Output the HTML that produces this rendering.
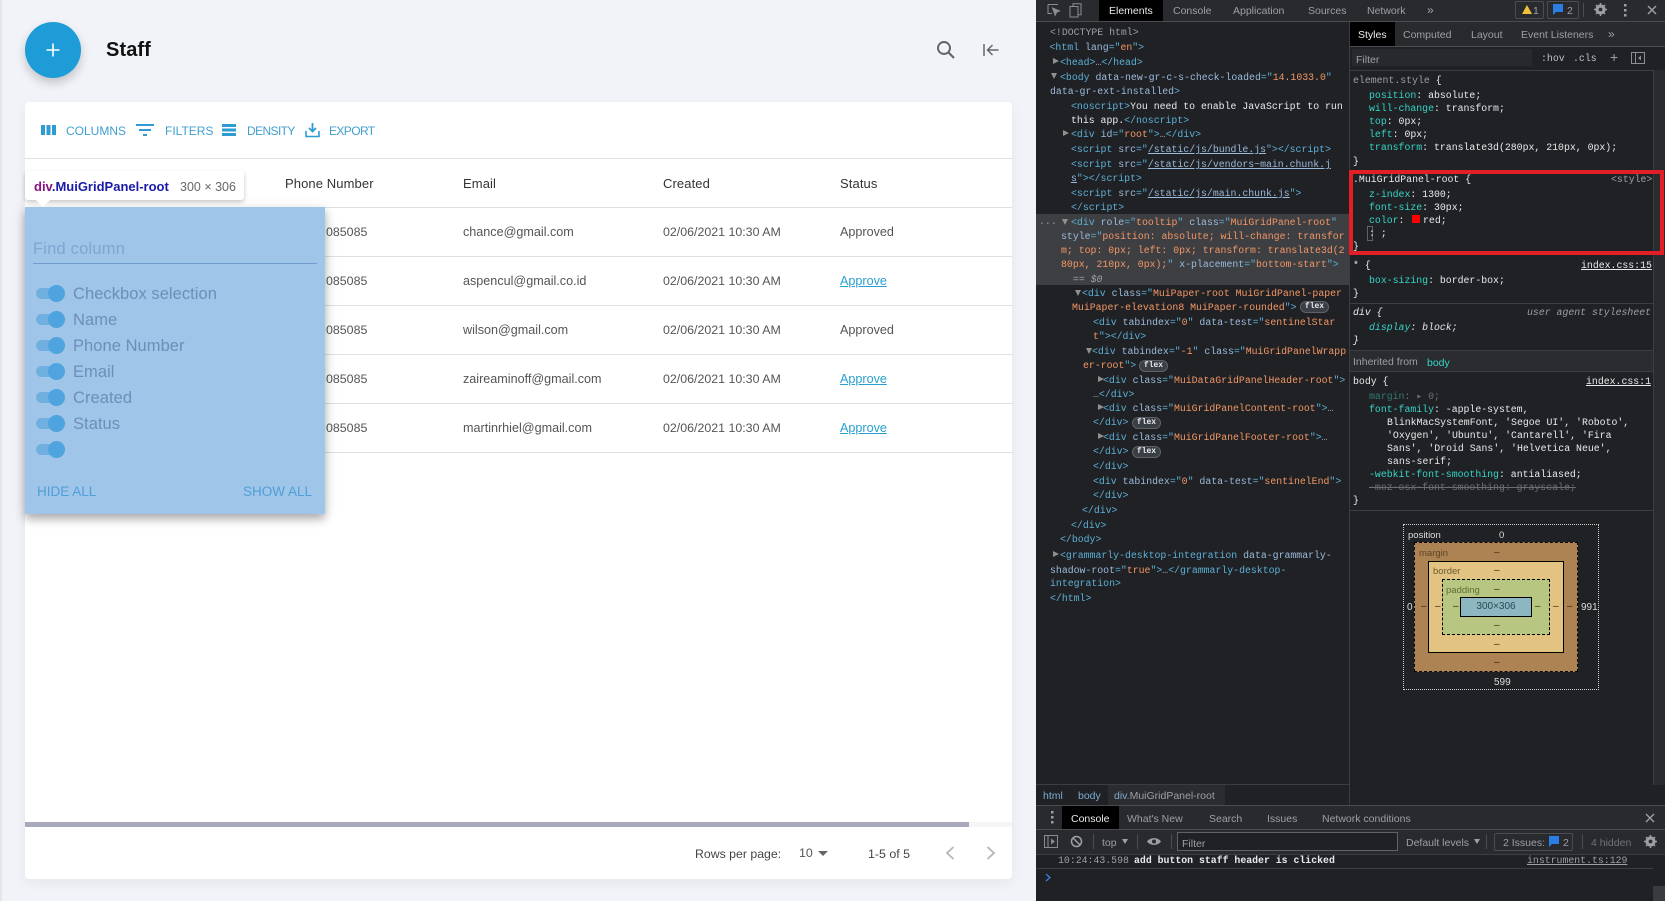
<!DOCTYPE html>
<html lang="en"><head><meta charset="utf-8"><title>Staff</title>
<style>
*{box-sizing:border-box}
html,body{margin:0;padding:0;width:1665px;height:901px;overflow:hidden;background:#f1f3f8;font-family:"Liberation Sans",sans-serif}
.a{position:absolute;white-space:pre}
.c{position:absolute;white-space:pre;font-size:12.4px;line-height:16px;color:#555}
.e{font-size:12.6px}
.h{color:#333;font-size:13px;letter-spacing:.1px}
.rl{position:absolute;left:325px;width:687px;height:1px;background:#e0e0e0}
.tb{position:absolute;font-size:12px;line-height:16px;top:123px;color:#3f9fce}
.sw{position:absolute;left:36px;width:23px;height:11px;border-radius:6px;background:#70b0e0}
.sw:after{content:"";position:absolute;left:12px;top:-3px;width:17px;height:17px;border-radius:50%;background:#4fa3de}
.lb{position:absolute;left:73px;font-size:16.5px;line-height:20px;color:#6a90ba;white-space:pre;letter-spacing:.05px}
#dt{position:absolute;left:1036px;top:0;width:629px;height:901px;background:#202124;overflow:hidden}
.l,.s{position:absolute;margin-top:2px;font-family:"Liberation Mono",monospace;font-size:9.85px;line-height:14px;height:14px;white-space:pre;color:#e8eaed}
.t{color:#5db0d7}.n{color:#9bbbdc}.v{color:#f29766}.g{color:#9aa0a6}
.p{color:#35d4c7}.f{font-family:"Liberation Sans",sans-serif;color:#9aa0a6;font-size:10.5px;line-height:14px;margin-top:1px;position:absolute;white-space:pre}
.d{position:absolute;font:10px/12px "Liberation Sans",sans-serif;color:#3a2a12}
.ar{position:absolute;width:0;height:0;border-left:6px solid #909090;border-top:3.5px solid transparent;border-bottom:3.5px solid transparent}
.ad{position:absolute;width:0;height:0;border-top:6px solid #909090;border-left:3.5px solid transparent;border-right:3.5px solid transparent}
.fx{position:absolute;width:29px;height:12px;border-radius:7px;border:1px solid #5f6368;background:#3a3f45;color:#e8eaed;font:bold 8px/10px "Liberation Mono",monospace;text-align:center}
.hr{position:absolute;background:#3c3d40}
</style></head><body>
<div style="position:absolute;left:0;top:0;width:2px;height:901px;background:#e3e5e9"></div>

<div style="position:absolute;left:25px;top:22px;width:56px;height:56px;border-radius:50%;background:#1e9cd7;box-shadow:0 5px 10px rgba(0,0,0,.2)"></div>
<svg class="a" style="left:45px;top:42px" width="16" height="16"><path d="M8 1.5v13M1.5 8h13" stroke="#fff" stroke-width="1.6" fill="none"/></svg>
<div class="a" style="left:106px;top:37px;font-size:20px;line-height:26px;color:#111;font-weight:bold;letter-spacing:.1px">Staff</div>
<svg class="a" style="left:935px;top:39px" width="21" height="21" viewBox="0 0 21 21"><circle cx="9" cy="9" r="6" fill="none" stroke="#5f6368" stroke-width="1.9"/><path d="M13.4 13.4l5.6 5.6" stroke="#5f6368" stroke-width="2.1"/></svg>
<svg class="a" style="left:982px;top:42px" width="18" height="16" viewBox="0 0 18 16"><path d="M2 2v12" stroke="#666" stroke-width="1.5"/><path d="M16.5 8H6M10.5 3L5.5 8l5 5" stroke="#666" stroke-width="1.5" fill="none"/></svg>

<div style="position:absolute;left:25px;top:102px;width:987px;height:777px;background:#fff;border-radius:4px;box-shadow:0 4px 12px rgba(30,40,70,.06)"></div>
<div style="position:absolute;left:25px;top:158px;width:987px;height:1px;background:#e0e0e0"></div>
<div style="position:absolute;left:25px;top:207px;width:987px;height:1px;background:#e0e0e0"></div>
<div class="rl" style="top:256px"></div><div class="rl" style="top:305px"></div><div class="rl" style="top:354px"></div><div class="rl" style="top:403px"></div><div class="rl" style="top:452px"></div>

<svg class="a" style="left:41px;top:124px" width="15" height="12"><path d="M0 1h4v10H0zM5.500 1h4v10h-4zM11 1h4v10h-4z" fill="#2f9bd3"/></svg>
<div class="tb" style="left:66px">COLUMNS</div>
<svg class="a" style="left:136px;top:123px" width="18" height="14"><path d="M0 1h18v2H0zM3 6h12v2H3zM7 11h4v2H7z" fill="#2f9bd3"/></svg>
<div class="tb" style="left:165px">FILTERS</div>
<svg class="a" style="left:222px;top:124px" width="14" height="12"><path d="M0 0h14v3H0zM0 4.500h14v3H0zM0 9h14v3H0z" fill="#2f9bd3"/></svg>
<div class="tb" style="left:247px;letter-spacing:-.6px">DENSITY</div>
<svg class="a" style="left:305px;top:122px" width="15" height="16" viewBox="0 0 15 16"><path d="M1 9v5.500h13V9" fill="none" stroke="#2f9bd3" stroke-width="1.6"/><path d="M7.500 1v8M4 6l3.500 3.500L11 6" fill="none" stroke="#2f9bd3" stroke-width="1.8"/></svg>
<div class="tb" style="left:329px;letter-spacing:-.6px">EXPORT</div>

<div class="c h" style="left:285px;top:176px">Phone Number</div>
<div class="c h" style="left:463px;top:176px">Email</div>
<div class="c h" style="left:663px;top:176px">Created</div>
<div class="c h" style="left:840px;top:176px">Status</div>

<div class="c" style="left:326px;top:224px">085085</div><div class="c e" style="left:463px;top:224px">chance@gmail.com</div><div class="c" style="left:663px;top:224px">02/06/2021 10:30 AM</div><div class="c e" style="left:840px;top:224px">Approved</div>
<div class="c" style="left:326px;top:273px">085085</div><div class="c e" style="left:463px;top:273px">aspencul@gmail.co.id</div><div class="c" style="left:663px;top:273px">02/06/2021 10:30 AM</div><div class="c e" style="left:840px;top:273px;color:#2a9fd0;text-decoration:underline">Approve</div>
<div class="c" style="left:326px;top:322px">085085</div><div class="c e" style="left:463px;top:322px">wilson@gmail.com</div><div class="c" style="left:663px;top:322px">02/06/2021 10:30 AM</div><div class="c e" style="left:840px;top:322px">Approved</div>
<div class="c" style="left:326px;top:371px">085085</div><div class="c e" style="left:463px;top:371px">zaireaminoff@gmail.com</div><div class="c" style="left:663px;top:371px">02/06/2021 10:30 AM</div><div class="c e" style="left:840px;top:371px;color:#2a9fd0;text-decoration:underline">Approve</div>
<div class="c" style="left:326px;top:420px">085085</div><div class="c e" style="left:463px;top:420px">martinrhiel@gmail.com</div><div class="c" style="left:663px;top:420px">02/06/2021 10:30 AM</div><div class="c e" style="left:840px;top:420px;color:#2a9fd0;text-decoration:underline">Approve</div>

<div style="position:absolute;left:25px;top:822px;width:987px;height:5px;background:#f5f5f5"></div>
<div style="position:absolute;left:25px;top:822px;width:944px;height:5px;background:#a9a9bc"></div>
<div class="c" style="left:695px;top:846px;color:#444;font-size:12.3px">Rows per page:</div>
<div class="c" style="left:799px;top:845px;color:#555">10</div>
<div class="a" style="left:818px;top:851px;width:0;height:0;border-top:5px solid #666;border-left:5px solid transparent;border-right:5px solid transparent"></div>
<div class="c" style="left:868px;top:846px;color:#444">1-5 of 5</div>
<svg class="a" style="left:944px;top:845px" width="12" height="16"><path d="M9.500 2L3 8l6.500 6" fill="none" stroke="#b5b5b5" stroke-width="1.8"/></svg>
<svg class="a" style="left:985px;top:845px" width="12" height="16"><path d="M2.500 2L9 8l-6.500 6" fill="none" stroke="#b5b5b5" stroke-width="1.8"/></svg>

<div style="position:absolute;left:25px;top:207px;width:300px;height:307px;background:#9fc5e8;box-shadow:0 5px 8px rgba(0,0,0,.25),0 3px 14px rgba(0,0,0,.12)"></div>
<div class="a" style="left:33px;top:239px;font-size:16.5px;line-height:20px;color:#7fa6d0;letter-spacing:.2px">Find column</div>
<div style="position:absolute;left:33px;top:263px;width:284px;height:1px;background:#6f9bcf"></div>
<div class="sw" style="top:288px"></div><div class="lb" style="top:284px">Checkbox selection</div>
<div class="sw" style="top:314px"></div><div class="lb" style="top:310px">Name</div>
<div class="sw" style="top:340px"></div><div class="lb" style="top:336px">Phone Number</div>
<div class="sw" style="top:366px"></div><div class="lb" style="top:362px">Email</div>
<div class="sw" style="top:392px"></div><div class="lb" style="top:388px">Created</div>
<div class="sw" style="top:418px"></div><div class="lb" style="top:414px">Status</div>
<div class="sw" style="top:444px"></div>
<div class="a" style="left:37px;top:484px;font-size:13.5px;line-height:16px;color:#4f9fd8">HIDE ALL</div>
<div class="a" style="left:243px;top:484px;font-size:13.5px;line-height:16px;color:#4f9fd8">SHOW ALL</div>

<div style="position:absolute;left:25px;top:171px;width:219px;height:29px;background:#fff;border-radius:3px;box-shadow:0 2px 5px rgba(0,0,0,.22)"></div>
<div class="a" style="left:36px;top:200px;width:0;height:0;border-top:7px solid #fff;border-left:7.500px solid transparent;border-right:7.500px solid transparent"></div>
<div class="a" style="left:34px;top:179px;font-size:13px;line-height:16px;font-weight:bold"><span style="color:#881280">div</span><span style="color:#1a1aa6">.MuiGridPanel-root</span></div>
<div class="a" style="left:180px;top:179px;font-size:12.5px;line-height:16px;color:#666">300 × 306</div>

<div id="dt">
<div style="position:absolute;left:0;top:0;width:629px;height:21px;background:#292a2d"></div>
<div class="hr" style="left:0;top:21px;width:629px;height:1px;background:#494c50"></div>
<svg class="a" style="left:11px;top:3px" width="40" height="15" viewBox="0 0 40 15" fill="none" stroke="#8a8d91"><path d="M1 1.500h10M1 1.500v9h4" stroke-width="1"/><path d="M5.500 5l7 3-3 1.300-1.300 3z" fill="#8a8d91"/><rect x="23" y="3.500" width="8" height="10.500"/><path d="M26 3.500V.7h8v11h-3"/></svg>
<div class="hr" style="left:63px;top:3px;width:1px;height:14px;background:#4a4c50"></div>
<div style="position:absolute;left:63px;top:0;width:64px;height:21px;background:#000"></div>
<div class="f" style="left:73px;top:3px;color:#e8eaed">Elements</div>
<div class="f" style="left:137px;top:3px">Console</div>
<div class="f" style="left:197px;top:3px">Application</div>
<div class="f" style="left:272px;top:3px">Sources</div>
<div class="f" style="left:331px;top:3px">Network</div>
<div class="f" style="left:391px;top:2px;font-size:12px">»</div>
<div style="position:absolute;left:479px;top:1px;width:29px;height:18px;border:1px solid #494c50;border-radius:2px"></div>
<svg class="a" style="left:486px;top:5px" width="10" height="9"><path d="M5 0l5 9H0z" fill="#f2c038"/></svg>
<div class="f" style="left:497px;top:3px">1</div>
<div style="position:absolute;left:511px;top:1px;width:32px;height:18px;border:1px solid #494c50;border-radius:2px"></div>
<svg class="a" style="left:517px;top:4px" width="11" height="11"><path d="M0 0h10v8H3l-3 3z" fill="#2a7de1"/></svg>
<div class="f" style="left:531px;top:3px">2</div>
<div class="hr" style="left:547px;top:3px;width:1px;height:14px;background:#4a4c50"></div>
<svg class="a" style="left:558px;top:3px" width="13" height="13" viewBox="0 0 13 13"><circle cx="6.500" cy="6.500" r="3.800" fill="none" stroke="#9aa0a6" stroke-width="2.600"/><path d="M6.500 0v13M0 6.500h13M2 2l9 9M11 2l-9 9" stroke="#9aa0a6" stroke-width="1.500"/><circle cx="6.500" cy="6.500" r="1.800" fill="#292a2d"/></svg>
<svg class="a" style="left:588px;top:4px" width="4" height="13"><path d="M0 0h2.500v2.500H0zM0 5h2.500v2.500H0zM0 10h2.500v2.500H0z" fill="#9aa0a6"/></svg>
<svg class="a" style="left:611px;top:5px" width="10" height="10"><path d="M1 1l8 8M9 1l-8 8" stroke="#9aa0a6" stroke-width="1.500"/></svg>

<div style="position:absolute;left:0;top:214px;width:313px;height:71px;background:#3e3f42"></div>
<div class="l g" style="left:3px;top:213px">...</div>
<div class="l" style="left:14px;top:24px"><span class="g">&lt;!DOCTYPE html&gt;</span></div>
<div class="l" style="left:13.500px;top:39px"><span class="t">&lt;html</span> <span class="n">lang</span><span class="t">="</span><span class="v">en</span><span class="t">"&gt;</span></div>
<div class="ar" style="left:17px;top:58px"></div>
<div class="l" style="left:24px;top:54px"><span class="t">&lt;head&gt;</span><span class="g">…</span><span class="t">&lt;/head&gt;</span></div>
<div class="ad" style="left:15px;top:73px"></div>
<div class="l" style="left:24px;top:69px"><span class="t">&lt;body</span> <span class="n">data-new-gr-c-s-check-loaded</span><span class="t">="</span><span class="v">14.1033.0</span><span class="t">"</span></div>
<div class="l" style="left:14px;top:83px"><span class="n">data-gr-ext-installed</span><span class="t">&gt;</span></div>
<div class="l" style="left:35px;top:98px"><span class="t">&lt;noscript&gt;</span>You need to enable JavaScript to run</div>
<div class="l" style="left:35px;top:112px">this app.<span class="t">&lt;/noscript&gt;</span></div>
<div class="ar" style="left:27px;top:130px"></div>
<div class="l" style="left:35px;top:126px"><span class="t">&lt;div</span> <span class="n">id</span><span class="t">="</span><span class="v">root</span><span class="t">"&gt;</span><span class="g">…</span><span class="t">&lt;/div&gt;</span></div>
<div class="l" style="left:35px;top:141px"><span class="t">&lt;script</span> <span class="n">src</span><span class="t">="</span><u style="color:#9bbbdc">/static/js/bundle.js</u><span class="t">"&gt;&lt;/script&gt;</span></div>
<div class="l" style="left:35px;top:156px"><span class="t">&lt;script</span> <span class="n">src</span><span class="t">="</span><u style="color:#9bbbdc">/static/js/vendors~main.chunk.j</u></div>
<div class="l" style="left:35px;top:170px"><u style="color:#9bbbdc">s</u><span class="t">"&gt;&lt;/script&gt;</span></div>
<div class="l" style="left:35px;top:185px"><span class="t">&lt;script</span> <span class="n">src</span><span class="t">="</span><u style="color:#9bbbdc">/static/js/main.chunk.js</u><span class="t">"&gt;</span></div>
<div class="l" style="left:35px;top:199px"><span class="t">&lt;/script&gt;</span></div>
<div class="ad" style="left:26px;top:219px"></div>
<div class="l" style="left:35px;top:214px"><span class="t">&lt;div</span> <span class="n">role</span><span class="t">="</span><span class="v">tooltip</span><span class="t">"</span> <span class="n">class</span><span class="t">="</span><span class="v">MuiGridPanel-root</span><span class="t">"</span></div>
<div class="l" style="left:25px;top:228px"><span class="n">style</span><span class="t">="</span><span class="v">position: absolute; will-change: transfor</span></div>
<div class="l" style="left:25px;top:242px"><span class="v">m; top: 0px; left: 0px; transform: translate3d(2</span></div>
<div class="l" style="left:25px;top:256px"><span class="v">80px, 210px, 0px);</span><span class="t">"</span> <span class="n">x-placement</span><span class="t">="</span><span class="v">bottom-start</span><span class="t">"&gt;</span></div>
<div class="l g" style="left:31px;top:271px;font-style:italic"> == $0</div>
<div class="ad" style="left:39px;top:290px"></div>
<div class="l" style="left:46px;top:285px"><span class="t">&lt;div</span> <span class="n">class</span><span class="t">="</span><span class="v">MuiPaper-root MuiGridPanel-paper</span></div>
<div class="l" style="left:36px;top:299px"><span class="v">MuiPaper-elevation8 MuiPaper-rounded</span><span class="t">"&gt;</span></div>
<div class="fx" style="left:264px;top:301px">flex</div>
<div class="l" style="left:57px;top:314px"><span class="t">&lt;div</span> <span class="n">tabindex</span><span class="t">="</span><span class="v">0</span><span class="t">"</span> <span class="n">data-test</span><span class="t">="</span><span class="v">sentinelStar</span></div>
<div class="l" style="left:57px;top:328px"><span class="v">t</span><span class="t">"&gt;&lt;/div&gt;</span></div>
<div class="ad" style="left:50px;top:348px"></div>
<div class="l" style="left:56px;top:343px"><span class="t">&lt;div</span> <span class="n">tabindex</span><span class="t">="</span><span class="v">-1</span><span class="t">"</span> <span class="n">class</span><span class="t">="</span><span class="v">MuiGridPanelWrapp</span></div>
<div class="l" style="left:47px;top:357px"><span class="v">er-root</span><span class="t">"&gt;</span></div>
<div class="fx" style="left:103px;top:360px">flex</div>
<div class="ar" style="left:62px;top:376px"></div>
<div class="l" style="left:67px;top:372px"><span class="t">&lt;div</span> <span class="n">class</span><span class="t">="</span><span class="v">MuiDataGridPanelHeader-root</span><span class="t">"&gt;</span></div>
<div class="l" style="left:57px;top:386px"><span class="g">…</span><span class="t">&lt;/div&gt;</span></div>
<div class="ar" style="left:62px;top:404px"></div>
<div class="l" style="left:67px;top:400px"><span class="t">&lt;div</span> <span class="n">class</span><span class="t">="</span><span class="v">MuiGridPanelContent-root</span><span class="t">"&gt;</span><span class="g">…</span></div>
<div class="l" style="left:57px;top:414px"><span class="t">&lt;/div&gt;</span></div>
<div class="fx" style="left:96px;top:417px">flex</div>
<div class="ar" style="left:62px;top:433px"></div>
<div class="l" style="left:67px;top:429px"><span class="t">&lt;div</span> <span class="n">class</span><span class="t">="</span><span class="v">MuiGridPanelFooter-root</span><span class="t">"&gt;</span><span class="g">…</span></div>
<div class="l" style="left:57px;top:443px"><span class="t">&lt;/div&gt;</span></div>
<div class="fx" style="left:96px;top:446px">flex</div>
<div class="l" style="left:57px;top:458px"><span class="t">&lt;/div&gt;</span></div>
<div class="l" style="left:57px;top:473px"><span class="t">&lt;div</span> <span class="n">tabindex</span><span class="t">="</span><span class="v">0</span><span class="t">"</span> <span class="n">data-test</span><span class="t">="</span><span class="v">sentinelEnd</span><span class="t">"&gt;</span></div>
<div class="l" style="left:57px;top:487px"><span class="t">&lt;/div&gt;</span></div>
<div class="l" style="left:46px;top:502px"><span class="t">&lt;/div&gt;</span></div>
<div class="l" style="left:35px;top:517px"><span class="t">&lt;/div&gt;</span></div>
<div class="l" style="left:24px;top:531px"><span class="t">&lt;/body&gt;</span></div>
<div class="ar" style="left:17px;top:551px"></div>
<div class="l" style="left:24px;top:547px"><span class="t">&lt;grammarly-desktop-integration</span> <span class="n">data-grammarly-</span></div>
<div class="l" style="left:14px;top:562px"><span class="n">shadow-root</span><span class="t">="</span><span class="v">true</span><span class="t">"&gt;</span><span class="g">…</span><span class="t">&lt;/grammarly-desktop-</span></div>
<div class="l" style="left:14px;top:575px"><span class="t">integration&gt;</span></div>
<div class="l" style="left:14px;top:590px"><span class="t">&lt;/html&gt;</span></div>

<div style="position:absolute;left:313px;top:22px;width:1px;height:783px;background:#3c3d40"></div>
<div style="position:absolute;left:314px;top:22px;width:315px;height:24px;background:#292a2d"></div>
<div style="position:absolute;left:314px;top:22px;width:45px;height:24px;background:#000"></div>
<div class="f" style="left:322px;top:27px;color:#e8eaed">Styles</div>
<div class="f" style="left:367px;top:27px">Computed</div>
<div class="f" style="left:435px;top:27px">Layout</div>
<div class="f" style="left:485px;top:27px">Event Listeners</div>
<div class="f" style="left:572px;top:26px;font-size:12px">»</div>
<div class="hr" style="left:314px;top:46px;width:315px;height:1px;background:#494c50"></div>
<div style="position:absolute;left:316px;top:49px;width:180px;height:17px;background:#28292c"></div>
<div class="f" style="left:320px;top:52px">Filter</div>
<div class="l" style="left:505px;top:50px;color:#bdc1c6">:hov</div>
<div class="l" style="left:537px;top:50px;color:#bdc1c6">.cls</div>
<div class="f" style="left:574px;top:49px;font-size:14px">+</div>
<svg class="a" style="left:595px;top:52px" width="14" height="12"><rect x=".5" y=".5" width="13" height="11" fill="none" stroke="#8a8d91"/><path d="M4.500 .5v11" stroke="#8a8d91"/><path d="M10 3.500v5L7 6z" fill="#8a8d91"/></svg>
<div class="hr" style="left:314px;top:70px;width:315px;height:1px"></div>
<div style="position:absolute;left:617px;top:70px;width:12px;height:715px;background:#2a2b2e;border-left:1px solid #3c3d40"></div>

<div class="s g" style="left:317px;top:72px">element.style <span style="color:#e8eaed">{</span></div>
<div class="s" style="left:333px;top:87px"><span class="p">position</span>: absolute;</div>
<div class="s" style="left:333px;top:100px"><span class="p">will-change</span>: transform;</div>
<div class="s" style="left:333px;top:113px"><span class="p">top</span>: 0px;</div>
<div class="s" style="left:333px;top:126px"><span class="p">left</span>: 0px;</div>
<div class="s" style="left:333px;top:139px"><span class="p">transform</span>: translate3d(280px, 210px, 0px);</div>
<div class="s" style="left:317px;top:153px">}</div>
<div style="position:absolute;left:313px;top:170px;width:315px;height:85px;border:4px solid #e21f26"></div>
<div class="s" style="left:317px;top:171px">.MuiGridPanel-root {</div>
<div class="s g" style="left:575px;top:171px">&lt;style&gt;</div>
<div class="s" style="left:333px;top:186px"><span class="p">z-index</span>: 1300;</div>
<div class="s" style="left:333px;top:199px"><span class="p">font-size</span>: 30px;</div>
<div class="s" style="left:333px;top:212px"><span class="p">color</span>:</div>
<div style="position:absolute;left:376px;top:215px;width:8px;height:8px;background:#f00"></div>
<div class="s" style="left:387px;top:212px">red;</div>
<div style="position:absolute;left:331px;top:226px;width:6px;height:15px;border:1px solid #5f6368"></div>
<div class="s" style="left:333px;top:225px">: ;</div>
<div class="s" style="left:317px;top:238px">}</div>
<div class="s" style="left:317px;top:257px">* {</div>
<div class="s" style="left:545px;top:257px"><u>index.css:15</u></div>
<div class="s" style="left:333px;top:272px"><span class="p">box-sizing</span>: border-box;</div>
<div class="s" style="left:317px;top:285px">}</div>
<div class="hr" style="left:314px;top:303px;width:303px;height:1px"></div>
<div class="s" style="left:317px;top:304px;font-style:italic">div {</div>
<div class="s g" style="left:491px;top:304px;font-style:italic">user agent stylesheet</div>
<div class="s" style="left:333px;top:319px;font-style:italic"><span class="p">display</span>: block;</div>
<div class="s" style="left:317px;top:332px;font-style:italic">}</div>
<div style="position:absolute;left:314px;top:350px;width:303px;height:22px;background:#2b2c2f;border-top:1px solid #3c3d40;border-bottom:1px solid #3c3d40"></div>
<div class="f" style="left:317px;top:354px">Inherited from</div>
<div class="f" style="left:391px;top:355px;color:#35d4c7">body</div>
<div class="s" style="left:317px;top:373px">body {</div>
<div class="s" style="left:550px;top:373px"><u>index.css:1</u></div>
<div class="s" style="left:333px;top:388px;color:#6b6f73"><span style="color:#2f7a73">margin</span>: ▸ 0;</div>
<div class="s" style="left:333px;top:401px"><span class="p">font-family</span>: -apple-system,</div>
<div class="s" style="left:351px;top:414px">BlinkMacSystemFont, 'Segoe UI', 'Roboto',</div>
<div class="s" style="left:351px;top:427px">'Oxygen', 'Ubuntu', 'Cantarell', 'Fira</div>
<div class="s" style="left:351px;top:440px">Sans', 'Droid Sans', 'Helvetica Neue',</div>
<div class="s" style="left:351px;top:453px">sans-serif;</div>
<div class="s" style="left:333px;top:466px"><span class="p">-webkit-font-smoothing</span>: antialiased;</div>
<div class="s" style="left:333px;top:479px;color:#6b6f73;text-decoration:line-through">-moz-osx-font-smoothing: grayscale;</div>
<div class="s" style="left:317px;top:492px">}</div>
<div class="hr" style="left:314px;top:510px;width:303px;height:1px"></div>

<div style="position:absolute;left:367px;top:524px;width:196px;height:166px;border:1px dotted #d0d0d0"></div>
<div class="f" style="left:372px;top:528px;color:#ddd;font-size:9.500px">position</div>
<div class="f" style="left:463px;top:528px;color:#ddd;font-size:9.500px">0</div>
<div class="f" style="left:371px;top:600px;color:#ddd;font-size:10px">0</div>
<div class="f" style="left:545px;top:600px;color:#ddd;font-size:10px">991</div>
<div class="f" style="left:458px;top:675px;color:#ddd;font-size:10px">599</div>
<div style="position:absolute;left:378px;top:542px;width:164px;height:130px;background:#ad8354;border:1px dashed #000"></div>
<div class="f" style="left:383px;top:546px;color:#5c4426;font-size:9.500px">margin</div>
<div style="position:absolute;left:392px;top:561px;width:136px;height:92px;background:#e3c381;border:1px solid #000"></div>
<div class="f" style="left:397px;top:564px;color:#6b5a33;font-size:9.500px">border</div>
<div style="position:absolute;left:406px;top:579px;width:108px;height:56px;background:#b7c781;border:1px dashed #000"></div>
<div class="f" style="left:410px;top:583px;color:#5c6b33;font-size:9.500px">padding</div>
<div style="position:absolute;left:424px;top:597px;width:72px;height:20px;background:#8cb6c0;border:1px solid #000;font:10px/18px 'Liberation Sans',sans-serif;color:#2a4a55;text-align:center">300×306</div>
<div class="d" style="left:458px;top:547px">–</div><div class="d" style="left:458px;top:565px">–</div><div class="d" style="left:458px;top:584px">–</div>
<div class="d" style="left:458px;top:620px">–</div><div class="d" style="left:458px;top:639px">–</div><div class="d" style="left:458px;top:657px">–</div>
<div class="d" style="left:385px;top:601px">–</div><div class="d" style="left:399px;top:601px">–</div><div class="d" style="left:417px;top:601px">–</div>
<div class="d" style="left:499px;top:601px">–</div><div class="d" style="left:517px;top:601px">–</div><div class="d" style="left:531px;top:601px">–</div>

<div class="hr" style="left:0;top:784px;width:313px;height:1px"></div>
<div class="hr" style="left:0;top:805px;width:629px;height:1px;background:#494c50"></div>
<div style="position:absolute;left:72px;top:785px;width:117px;height:20px;background:#2b2c2f"></div>
<div class="f" style="left:7px;top:788px;color:#7cacd0">html</div>
<div class="f" style="left:42px;top:788px;color:#7cacd0">body</div>
<div class="f" style="left:78px;top:788px;color:#9aa0a6"><span style="color:#7cacd0">div</span>.MuiGridPanel-root</div>

<div style="position:absolute;left:0;top:806px;width:629px;height:23px;background:#292a2d"></div>
<div style="position:absolute;left:26px;top:806px;width:57px;height:23px;background:#000"></div>
<svg class="a" style="left:15px;top:811px" width="3" height="13"><path d="M0 0h2.500v2.500H0zM0 5h2.500v2.500H0zM0 10h2.500v2.500H0z" fill="#9aa0a6"/></svg>
<div class="f" style="left:35px;top:811px;color:#e8eaed">Console</div>
<div class="f" style="left:91px;top:811px">What's New</div>
<div class="f" style="left:173px;top:811px">Search</div>
<div class="f" style="left:231px;top:811px">Issues</div>
<div class="f" style="left:286px;top:811px">Network conditions</div>
<svg class="a" style="left:609px;top:813px" width="10" height="10"><path d="M1 1l8 8M9 1l-8 8" stroke="#9aa0a6" stroke-width="1.400"/></svg>
<div class="hr" style="left:0;top:829px;width:629px;height:1px;background:#494c50"></div>
<div style="position:absolute;left:0;top:830px;width:629px;height:24px;background:#292a2d"></div>
<svg class="a" style="left:8px;top:835px" width="14" height="13"><rect x=".5" y=".5" width="13" height="12" fill="none" stroke="#8a8d91"/><path d="M4 .5v12" stroke="#8a8d91"/><path d="M7 3.500l4 3-4 3z" fill="#8a8d91"/></svg>
<svg class="a" style="left:34px;top:835px" width="13" height="13"><circle cx="6.500" cy="6.500" r="5" fill="none" stroke="#9aa0a6" stroke-width="1.500"/><path d="M3 3l7 7" stroke="#9aa0a6" stroke-width="1.500"/></svg>
<div class="hr" style="left:57px;top:834px;width:1px;height:15px;background:#4a4c50"></div>
<div class="f" style="left:66px;top:835px">top</div>
<div class="a" style="left:86px;top:839px;border-top:5px solid #9aa0a6;border-left:3.500px solid transparent;border-right:3.500px solid transparent"></div>
<div class="hr" style="left:101px;top:834px;width:1px;height:15px;background:#4a4c50"></div>
<svg class="a" style="left:111px;top:836px" width="14" height="11"><path d="M0 5.500C3 1 11 1 14 5.500 11 10 3 10 0 5.500z" fill="#9aa0a6"/><circle cx="7" cy="5.500" r="2" fill="#292a2d"/></svg>
<div class="hr" style="left:135px;top:834px;width:1px;height:15px;background:#4a4c50"></div>
<div style="position:absolute;left:141px;top:832px;width:221px;height:19px;border:1px solid #5f6368;background:#202124"></div>
<div class="f" style="left:146px;top:836px">Filter</div>
<div class="f" style="left:370px;top:835px">Default levels</div>
<div class="a" style="left:438px;top:839px;border-top:5px solid #9aa0a6;border-left:3.500px solid transparent;border-right:3.500px solid transparent"></div>
<div class="hr" style="left:450px;top:834px;width:1px;height:15px;background:#4a4c50"></div>
<div style="position:absolute;left:458px;top:833px;width:79px;height:18px;border:1px solid #494c50;border-radius:2px"></div>
<div class="f" style="left:467px;top:835px">2 Issues:</div>
<svg class="a" style="left:513px;top:836px" width="11" height="11"><path d="M0 0h10v8H3l-3 3z" fill="#2a7de1"/></svg>
<div class="f" style="left:527px;top:835px">2</div>
<div class="hr" style="left:546px;top:834px;width:1px;height:15px;background:#4a4c50"></div>
<div class="f" style="left:555px;top:835px;color:#6f7377">4 hidden</div>
<svg class="a" style="left:608px;top:835px" width="13" height="13" viewBox="0 0 13 13"><circle cx="6.500" cy="6.500" r="3.800" fill="none" stroke="#9aa0a6" stroke-width="2.600"/><path d="M6.500 0v13M0 6.500h13M2 2l9 9M11 2l-9 9" stroke="#9aa0a6" stroke-width="1.500"/><circle cx="6.500" cy="6.500" r="1.800" fill="#292a2d"/></svg>
<div class="hr" style="left:0;top:854px;width:629px;height:1px"></div>
<div class="s g" style="left:22px;top:852px">10:24:43.598</div>
<div class="s" style="left:98px;top:852px;font-weight:bold">add button staff header is clicked</div>
<div class="s g" style="left:491px;top:852px"><u>instrument.ts:129</u></div>
<div class="hr" style="left:0;top:868px;width:617px;height:1px"></div>
<svg class="a" style="left:9px;top:873px" width="7" height="9"><path d="M1 1l4 3.500L1 8" fill="none" stroke="#3b82d8" stroke-width="1.300"/></svg>
<div style="position:absolute;left:617px;top:886px;width:12px;height:15px;background:#3a3b3e"></div>
</div>
</body></html>
